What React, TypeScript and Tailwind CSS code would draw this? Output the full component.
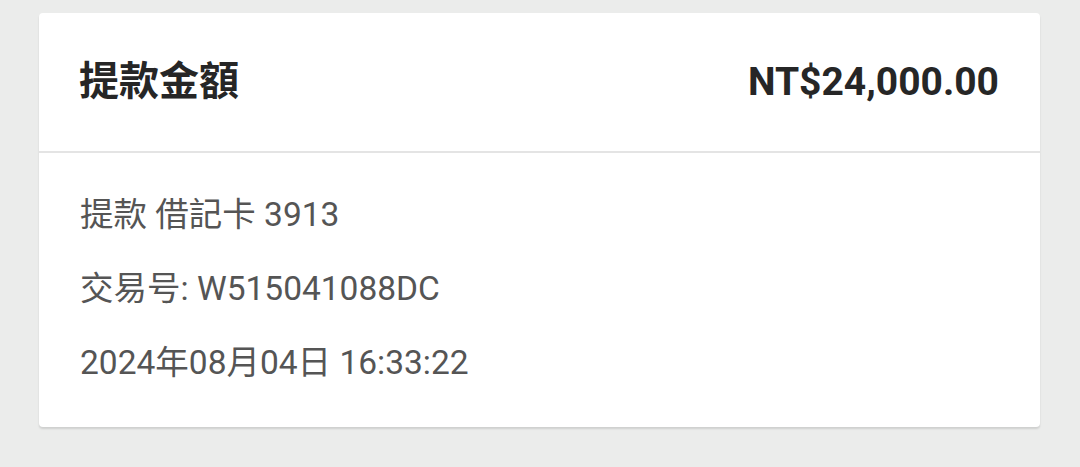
export default function App() {
  const font = { fontFamily: '"Roboto", "Noto Sans CJK TC", sans-serif' };
  return (
    <div className="w-[1080px] h-[467px] bg-[#ebeceb] pt-[13px] pl-[39px]" style={font}>
      <div className="w-[1001px] h-[414px] bg-white rounded-[4px] shadow-[0_2px_2px_rgba(0,0,0,0.12)] flex flex-col">
        <div className="h-[140px] flex items-center justify-between pl-[40px] pr-[41px] border-b-2 border-[#e4e4e4]">
          <div className="text-[40px] font-bold text-[#262626] leading-none">提款金額</div>
          <div className="text-[39px] font-bold text-[#262626] leading-none">NT$24,000.00</div>
        </div>
        <div className="flex flex-col pl-[41px] pt-[42px] gap-[34px] text-[33.5px] text-[#555555] leading-[40px]">
          <div>提款 借記卡 3913</div>
          <div>交易号: W515041088DC</div>
          <div>2024年08月04日 16:33:22</div>
        </div>
      </div>
    </div>
  );
}
